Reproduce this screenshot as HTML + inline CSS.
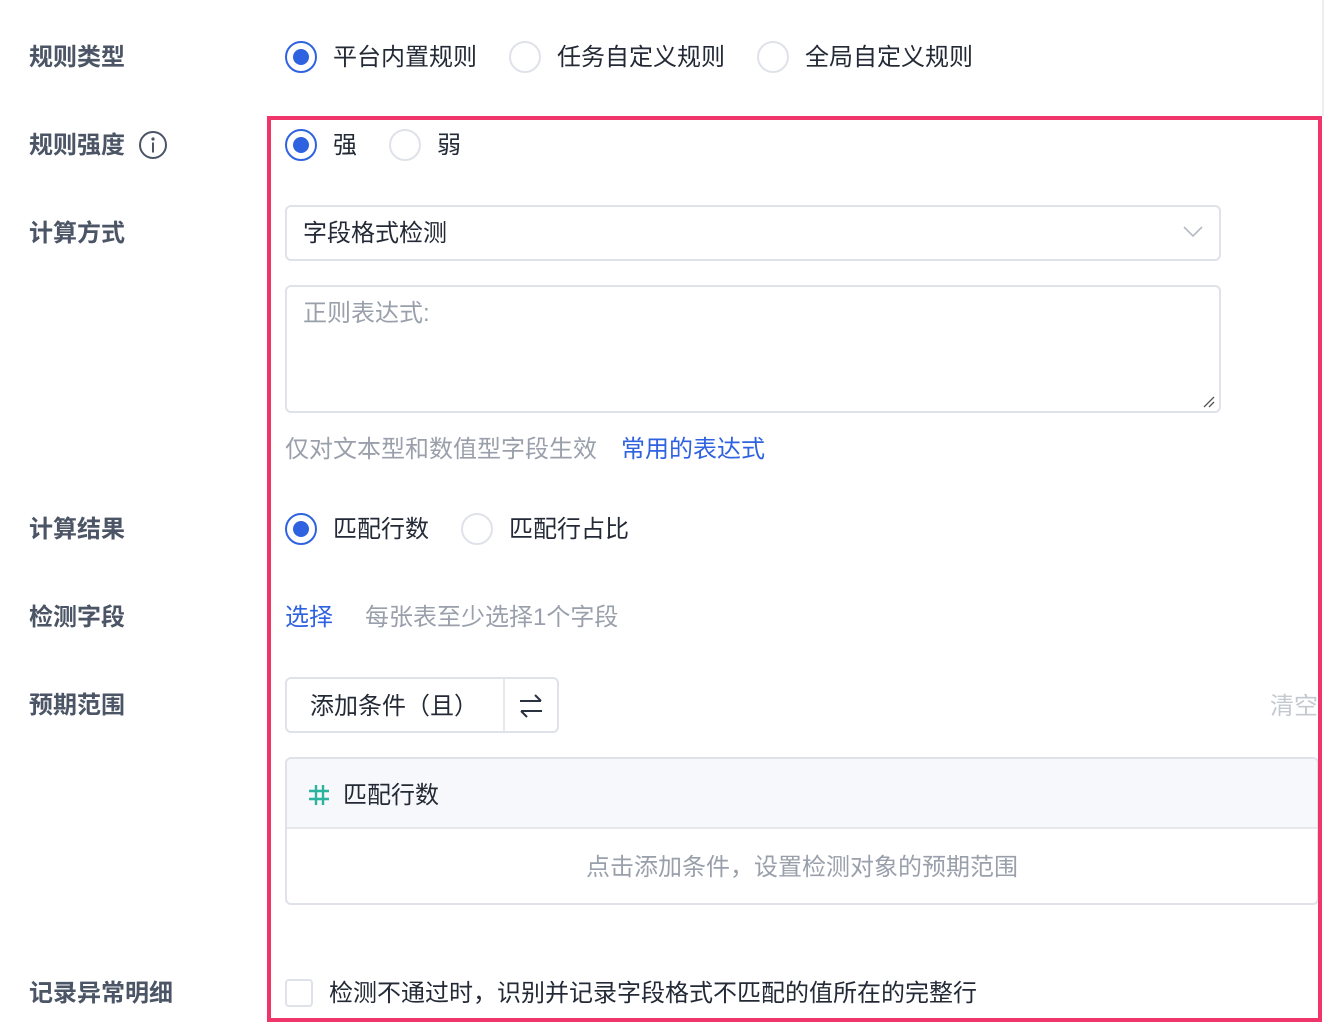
<!DOCTYPE html>
<html><head><meta charset="utf-8"><style>
*{box-sizing:border-box;margin:0;padding:0}
body{width:1324px;height:1025px;background:#fff;position:relative;overflow:hidden;font-family:"Liberation Sans","Noto Sans CJK SC",sans-serif;color:#1f2633}
.a{position:absolute;white-space:nowrap;line-height:1.2}
.lbl{font-size:24px;font-weight:bold;color:#4b5565;left:29px;margin-top:3px}
.t{font-size:24px;color:#232a36;margin-top:3px}
.r{position:absolute;width:32px;height:32px;border-radius:50%;border:2px solid #dfe2e8;background:#fff}
.r.on{border-color:#2f62e0}
.r.on:after{content:"";position:absolute;left:6px;top:6px;width:16px;height:16px;border-radius:50%;background:#2f62e0}
.box{position:absolute;border:2px solid #dfe2e8;border-radius:6px;background:#fff}
</style></head><body>
<div class="a lbl" style="top:41px">规则类型</div>
<div class="a lbl" style="top:129px">规则强度</div>
<svg class="a" style="left:138px;top:130px" width="30" height="30" viewBox="0 0 30 30"><circle cx="15" cy="15" r="13" fill="none" stroke="#4b5565" stroke-width="2"/><circle cx="15" cy="9" r="1.6" fill="#4b5565"/><rect x="14" y="12.5" width="2" height="10" fill="#4b5565"/></svg>
<div class="a lbl" style="top:217px">计算方式</div>
<div class="a lbl" style="top:513px">计算结果</div>
<div class="a lbl" style="top:601px">检测字段</div>
<div class="a lbl" style="top:689px">预期范围</div>
<div class="a lbl" style="top:977px">记录异常明细</div>

<div class="r on" style="left:285px;top:41px"></div><div class="a t" style="left:333px;top:41px">平台内置规则</div>
<div class="r" style="left:509px;top:41px"></div><div class="a t" style="left:557px;top:41px">任务自定义规则</div>
<div class="r" style="left:757px;top:41px"></div><div class="a t" style="left:805px;top:41px">全局自定义规则</div>

<div class="a" style="left:1322px;top:0;width:2px;height:116px;background:#eceef2"></div>

<div class="r on" style="left:285px;top:129px"></div><div class="a t" style="left:333px;top:129px">强</div>
<div class="r" style="left:389px;top:129px"></div><div class="a t" style="left:437px;top:129px">弱</div>

<div class="box" style="left:285px;top:205px;width:936px;height:56px"></div>
<div class="a t" style="left:303px;top:217px">字段格式检测</div>
<svg class="a" style="left:1182px;top:224px" width="22" height="14"><path d="M2 3 L11 12 L20 3" fill="none" stroke="#b5bac4" stroke-width="1.6"/></svg>

<div class="box" style="left:285px;top:285px;width:936px;height:128px"></div>
<div class="a t" style="left:303px;top:297px;color:#9aa0ab">正则表达式:</div>
<svg class="a" style="left:1202px;top:395px" width="14" height="14"><path d="M2 12 L12 2 M7 12 L12 7" stroke="#555" stroke-width="1.3"/></svg>

<div class="a t" style="left:285px;top:433px;color:#9aa0ab">仅对文本型和数值型字段生效</div>
<div class="a t" style="left:621px;top:433px;color:#2f62e0">常用的表达式</div>

<div class="r on" style="left:285px;top:513px"></div><div class="a t" style="left:333px;top:513px">匹配行数</div>
<div class="r" style="left:461px;top:513px"></div><div class="a t" style="left:509px;top:513px">匹配行占比</div>

<div class="a t" style="left:285px;top:601px;color:#2f62e0">选择</div>
<div class="a t" style="left:365px;top:601px;color:#9aa0ab">每张表至少选择1个字段</div>

<div class="box" style="left:285px;top:677px;width:274px;height:56px"></div>
<div class="a" style="left:503px;top:679px;width:2px;height:52px;background:#e6e8ec"></div>
<div class="a t" style="left:310px;top:690px">添加条件（且）</div>
<svg class="a" style="left:517px;top:692px" width="28" height="28"><path d="M3 9 H24 M18 3 L24 9 M25 19 H4 M10 25 L4 19" fill="none" stroke="#2a3140" stroke-width="2"/></svg>
<div class="a t" style="left:1270px;top:690px;color:#c4c8cf">清空</div>

<div class="box" style="left:285px;top:757px;width:1034px;height:148px"></div>
<div class="a" style="left:287px;top:759px;width:1030px;height:70px;background:#f7f8fb;border-bottom:2px solid #e6e8ec;border-radius:5px 5px 0 0"></div>
<svg class="a" style="left:307px;top:783px" width="24" height="24"><path d="M9 2 V22 M16 2 V22 M2 8 H22 M2 16 H22" stroke="#2bb3a0" stroke-width="2.4"/></svg>
<div class="a t" style="left:343px;top:779px">匹配行数</div>
<div class="a t" style="left:586px;top:851px;color:#9aa0ab">点击添加条件，设置检测对象的预期范围</div>

<div class="a" style="left:285px;top:979px;width:28px;height:28px;border:2px solid #dfe2e8;border-radius:4px"></div>
<div class="a t" style="left:329px;top:977px">检测不通过时，识别并记录字段格式不匹配的值所在的完整行</div>

<div class="a" style="left:267px;top:116px;width:1055px;height:906px;border:4px solid #f0356b"></div>
</body></html>
